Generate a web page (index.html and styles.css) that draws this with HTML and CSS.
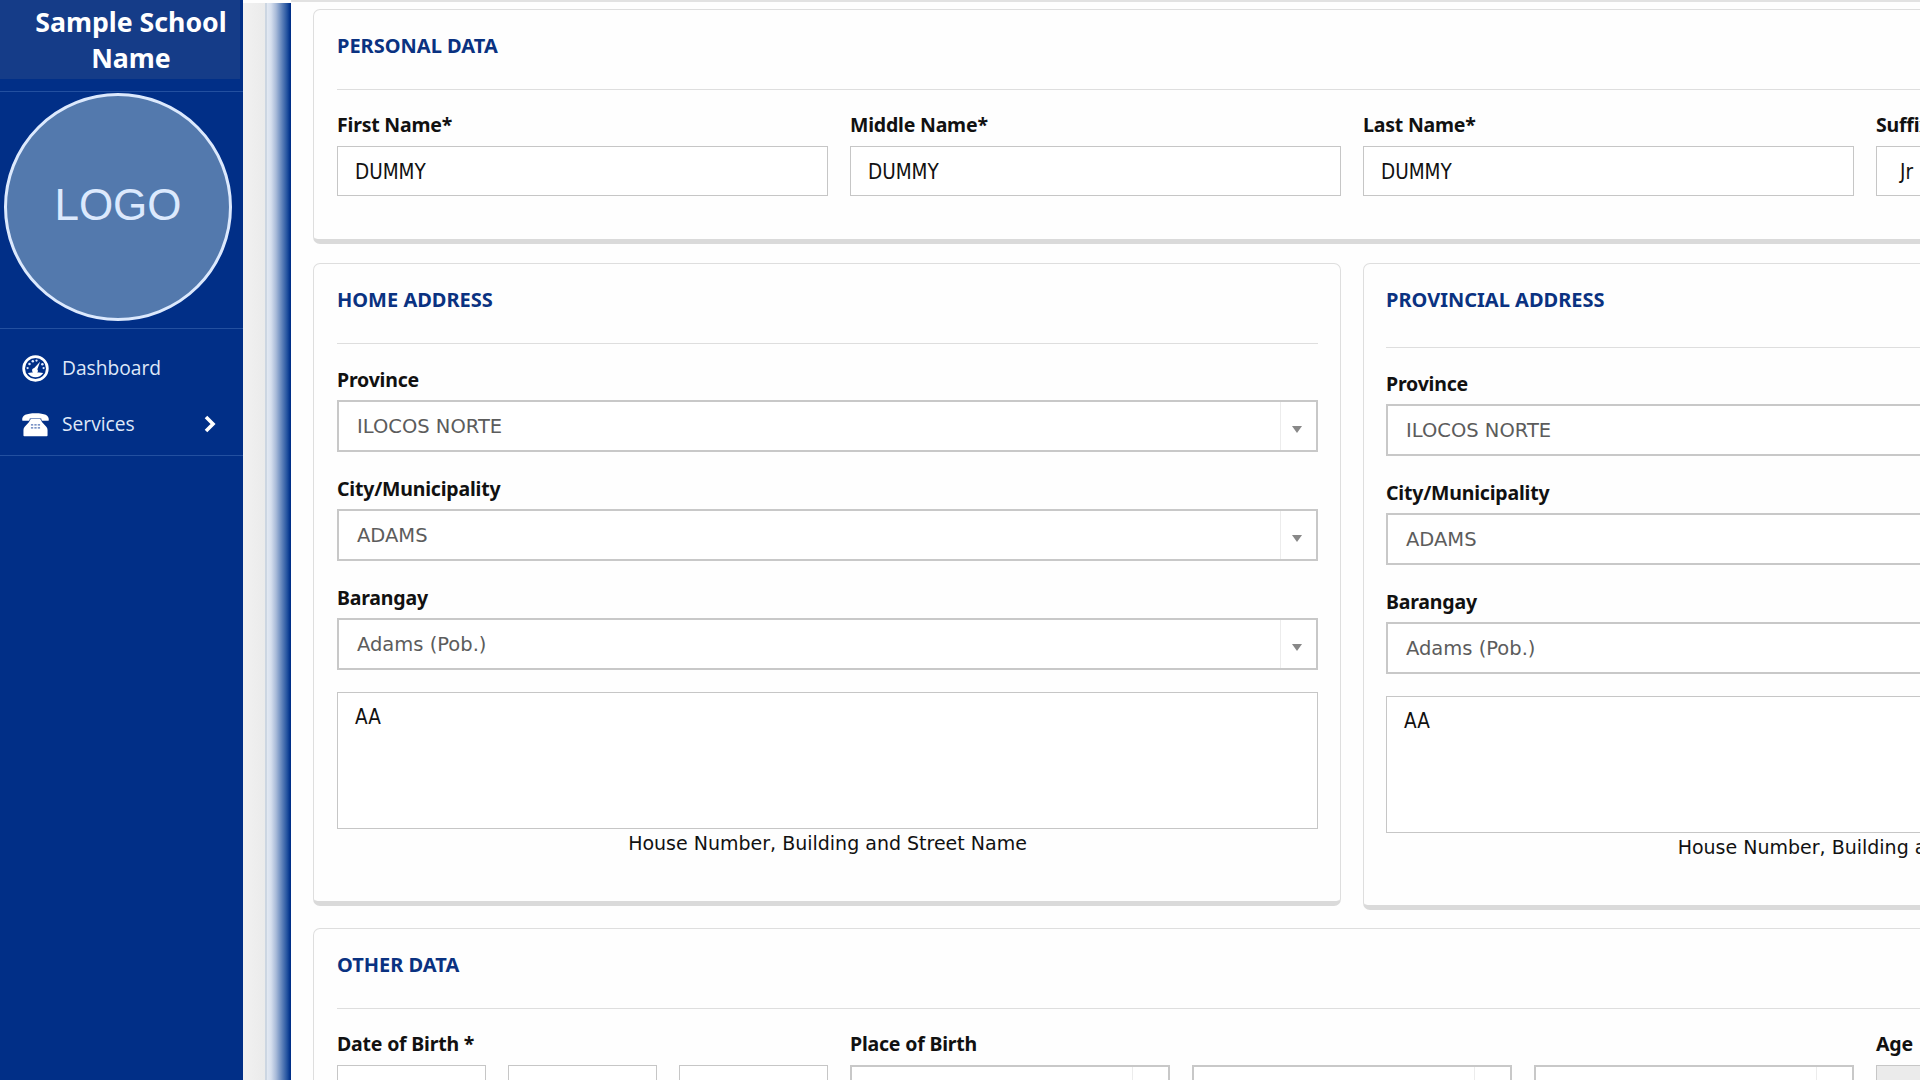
FILE: index.html
```html
<!DOCTYPE html>
<html lang="en">
<head>
<meta charset="utf-8">
<title>Student Information</title>
<link rel="stylesheet" href="styles.css">
</head>
<body>
<aside class="sidebar">
  <div class="school">Sample School<br>Name</div>
  <div class="logo-area"><div class="logo">LOGO</div></div>
  <nav class="menu">
    <a class="menu-item">
      <svg class="menu-icon" viewBox="0 0 26 26">
        <circle cx="13" cy="13" r="11.4" fill="none" stroke="#fff" stroke-width="2.6"/>
        <path d="M5.600 17.400Q13 15.600 20.400 17.400A8.800 8.800 0 0 1 5.600 17.400z" fill="#fff"/>
        <path d="M17.4 6.400l-2.600 7.400a2.700 2.700 0 1 1-3-1.200z" fill="#fff"/>
        <g fill="#dfe9ff"><circle cx="5.4" cy="12.6" r="1.1"/><circle cx="7.2" cy="8.6" r="1.2"/><circle cx="10.4" cy="6" r="1.2"/><circle cx="14" cy="5.400" r="1.1"/><circle cx="19.6" cy="8.8" r="1.2"/><circle cx="20.8" cy="12.6" r="1.1"/></g>
      </svg>
      <span>Dashboard</span>
    </a>
    <a class="menu-item">
      <svg class="menu-icon" viewBox="0 0 26 26">
        <path d="M.2 8.600C0 4.200 4 2.200 13 2.200s13 2 12.800 6.400c-.1.700-.5.900-1 .9h-5c-.6 0-.9-.3-1-.9l-.3-1.400H7.500l-.3 1.400c-.1.600-.4.900-1 .9h-5c-.5 0-.9-.2-1-.9z" fill="#fff"/>
        <path d="M8.400 7.600h9.200l1.800 3.200 4 4.400q1.200 1.400 1.200 3V23.600c0 .5-.3.800-.8.800H2.200c-.5 0-.8-.3-.8-.8V18.200q0-1.600 1.200-3l4-4.400z" fill="#fff"/>
        <path d="M8.600 13.400h2.200M11.900 13.400h2.200M15.200 13.400h2.200M8.600 16.200h2.200M11.900 16.200h2.200M15.200 16.200h2.200" stroke="#5273b4" stroke-width="1.200"/>
      </svg>
      <span>Services</span>
      <svg class="chevron" viewBox="0 0 12 18"><path d="M2 2l7 7-7 7" fill="none" stroke="#fff" stroke-width="3.600"/></svg>
    </a>
  </nav>
</aside>
<div class="gutter"></div>
<main class="content">
  <section class="card card-wide">
    <h2 class="title">PERSONAL DATA</h2>
    <hr class="rule">
    <div class="columns">
      <div><div class="label">First Name*</div><div class="input">DUMMY</div></div>
      <div><div class="label">Middle Name*</div><div class="input">DUMMY</div></div>
      <div><div class="label">Last Name*</div><div class="input">DUMMY</div></div>
      <div><div class="label">Suffix</div><div class="input input-suffix">Jr</div></div>
    </div>
  </section>
  <div class="addresses">
    <section class="card card-address">
      <h2 class="title">HOME ADDRESS</h2>
      <hr class="rule">
      <div class="label">Province</div>
      <div class="select"><span>ILOCOS NORTE</span></div>
      <div class="label">City/Municipality</div>
      <div class="select"><span>ADAMS</span></div>
      <div class="label">Barangay</div>
      <div class="select"><span>Adams (Pob.)</span></div>
      <div class="textarea">AA</div>
      <div class="caption">House Number, Building and Street Name</div>
    </section>
    <section class="card card-address card-provincial">
      <h2 class="title">PROVINCIAL ADDRESS</h2>
      <hr class="rule">
      <div class="label">Province</div>
      <div class="select"><span>ILOCOS NORTE</span></div>
      <div class="label">City/Municipality</div>
      <div class="select"><span>ADAMS</span></div>
      <div class="label">Barangay</div>
      <div class="select"><span>Adams (Pob.)</span></div>
      <div class="textarea">AA</div>
      <div class="caption">House Number, Building and Street Name</div>
    </section>
  </div>
  <section class="card card-wide card-other">
    <h2 class="title">OTHER DATA</h2>
    <hr class="rule">
    <div class="columns">
      <div><div class="label">Date of Birth *</div>
        <div class="triple"><div class="input"></div><div class="input"></div><div class="input"></div></div></div>
      <div class="span-two"><div class="label">Place of Birth</div>
        <div class="triple"><div class="select"></div><div class="select"></div><div class="select"></div></div></div>
      <div><div class="label">Age</div><div class="input input-disabled"></div></div>
    </div>
  </section>
</main>
</body>
</html>
```
FILE: styles.css
```css
* { box-sizing: border-box; }
html, body { height: 100%; }
body {
  margin: 0;
  display: flex;
  overflow: hidden;
  background: #fefefe;
  color: #111;
  font-family: "DejaVu Sans", sans-serif;
}

/* Sidebar */
.sidebar {
  flex: none;
  width: 243px;
  height: 1080px;
  background: #012f87;
  color: #fff;
}
.school {
  width: 240px;
  height: 79px;
  padding: 4px 0 0 22px;
  background: #153c88;
  font: bold 26.7px/36px "Noto Sans", sans-serif;
  text-align: center;
}
.logo-area {
  height: 238px;
  margin-top: 12px;
  padding: 1px 0 0 4px;
  border-top: 1px solid #2350a0;
  border-bottom: 1px solid #2350a0;
}
.logo {
  width: 228px;
  height: 228px;
  border: 3.5px solid #dce9fd;
  border-radius: 50%;
  background: #5379ad;
  color: #dce9fd;
  font: 44px/217px "Liberation Sans", sans-serif;
  text-align: center;
}
.menu {
  height: 127px;
  padding-top: 11px;
  border-bottom: 1px solid #2350a0;
}
.menu-item {
  display: flex;
  align-items: center;
  height: 56px;
  padding: 0 27px 0 22px;
  color: #dfe8f8;
  font: 19.2px/56px "Open Sans", sans-serif;
}
.menu-icon { width: 27px; height: 27px; margin-right: 13px; }
.chevron { width: 12px; height: 18px; margin-left: auto; }

.gutter {
  flex: none;
  width: 48px;
  height: 1077px;
  margin-top: 3px;
  background: linear-gradient(90deg, #f1f1f1 0, #ebebeb 22px, #ccd6e2 22px, #ccd6e2 24px, #e3e9f2 24px, #d6dfee 28px, #a9bbd9 33px, #5f82ba 39px, #2453a0 44px, #00308a 47px, #002d85 48px);
}

/* Form */
.content {
  flex: 1;
  min-width: 0;
  height: 1080px;
  overflow: hidden;
  padding: 7px 0 0 22px;
  border-top: 2px solid #e2e2e2;
}
.card {
  padding: 24px 23px 0;
  border: 1px solid #dedede;
  border-bottom: 5px solid #dadada;
  border-radius: 7px;
}
.card-wide { width: 2079px; height: 235px; }
.addresses { display: flex; align-items: flex-start; gap: 22px; margin-top: 19px; }
.card-address { flex: none; width: 1028px; height: 643px; padding: 24px 22px 0 23px; }
.card-provincial { height: 647px; padding-left: 22px; }
.card-other { height: 300px; margin-top: 18px; }

.title {
  margin: 0;
  color: #0a3281;
  font: bold 20px/24px "Noto Sans", sans-serif;
}
.rule {
  height: 1px;
  margin: 31px 0 23px;
  border: 0;
  background: #dedede;
}
.card-address .rule { margin-bottom: 24px; }
.card-provincial .rule { margin-top: 35px; }
.columns { display: grid; grid-template-columns: repeat(4, 491px); gap: 22px; }
.span-two { grid-column: span 2; }
.triple { display: grid; grid-template-columns: repeat(3, 1fr); gap: 22px; }

.label {
  margin-bottom: 9px;
  color: #111;
  font: bold 19.5px/24px "Noto Sans", sans-serif;
  letter-spacing: -0.2px;
  white-space: nowrap;
}
.card-address .label { margin-bottom: 8px; }
.input, .select, .textarea {
  border: 1px solid #c6c6c6;
  background: #fff;
}
.input, .textarea {
  font-family: "DejaVu Sans Condensed", "DejaVu Sans", sans-serif;
  font-size: 20.5px;
}
.input { height: 50px; padding: 1px 17px 0; line-height: 48px; }
.input-suffix { padding-left: 23px; }
.input-disabled { background: #ebebeb; }
.select {
  position: relative;
  display: flex;
  align-items: center;
  height: 52px;
  padding-left: 18px;
  border: 2px solid #c8c8c8;
  color: #5c5c5c;
  font-size: 19.5px;
}
.select::after {
  content: "";
  width: 35px;
  height: 100%;
  margin-left: auto;
  border-left: 1px solid #ececec;
}
.select::before {
  content: "";
  position: absolute;
  right: 14px;
  top: 24px;
  border: 5px solid transparent;
  border-top: 7px solid #888;
  border-bottom: 0;
}
.card-address .select + .label { margin-top: 25px; }
.textarea { height: 137px; margin-top: 22px; padding: 12px 17px; line-height: 24px; }
.caption { margin-top: 2px; font-size: 19px; line-height: 24px; text-align: center; }
```
